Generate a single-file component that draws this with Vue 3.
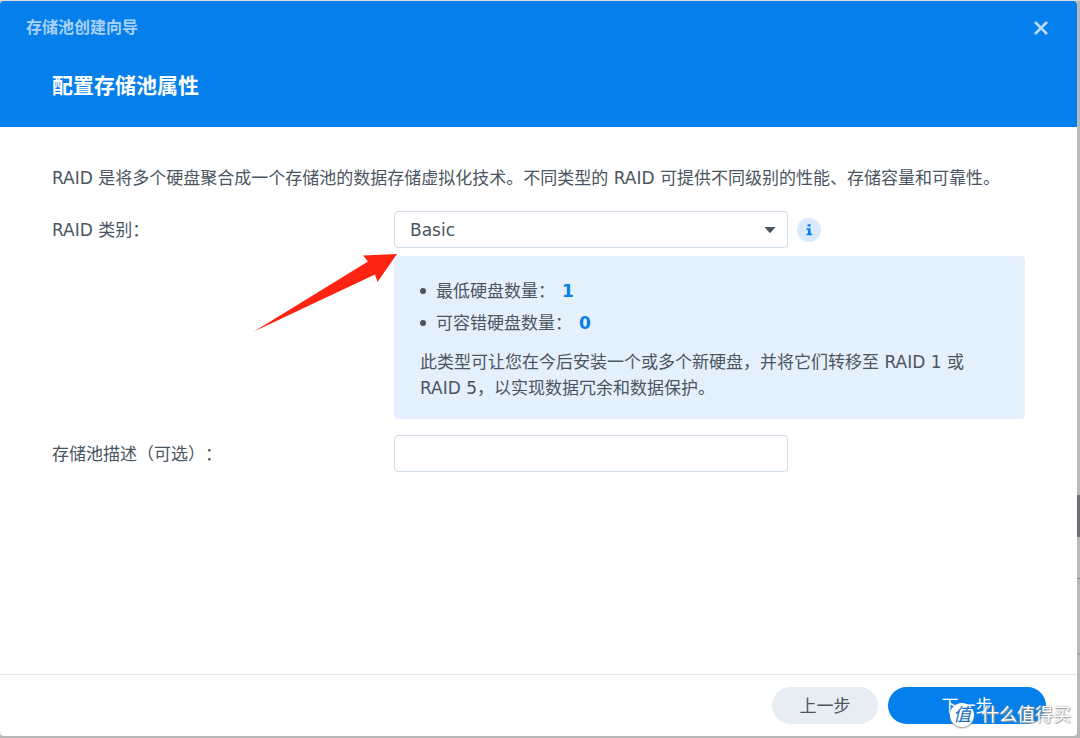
<script setup>
import { ref } from 'vue'

const raidTypes = ['Basic', 'JBOD', 'RAID 0', 'RAID 1', 'RAID 5']
const raidType = ref('Basic')
const description = ref('')
const facts = [
  { label: '最低硬盘数量：', value: 1 },
  { label: '可容错硬盘数量：', value: 0 },
]
</script>

<template>
  <div class="desktop">
    <main class="wizard">
      <header class="head">
        <div class="titlebar">
          <span class="title">存储池创建向导</span>
          <button class="close" type="button" aria-label="关闭">
            <svg viewBox="0 0 14 14" width="14" height="14">
              <path d="M1 1 L13 13 M13 1 L1 13" />
            </svg>
          </button>
        </div>
        <h1>配置存储池属性</h1>
      </header>

      <section class="body">
        <p class="intro">RAID 是将多个硬盘聚合成一个存储池的数据存储虚拟化技术。不同类型的 RAID 可提供不同级别的性能、存储容量和可靠性。</p>
        <div class="row">
          <label for="raid">RAID 类别：</label>
          <div class="control">
            <div class="select">
              <select id="raid" v-model="raidType">
                <option v-for="t in raidTypes" :key="t">{{ t }}</option>
              </select>
              <svg class="caret" viewBox="0 0 12 6" width="12" height="6"><path d="M0.5 0 H11.500 L7 5.2 Q6 6.2 5 5.2 Z" /></svg>
            </div>
            <button class="info" type="button" aria-label="说明">
              <svg viewBox="0 0 24 24" width="24" height="24">
                <path d="M10.6 6.2 H13.6 V8.6 H10.6 Z M9.6 10.2 H13.6 V15.4 H15 V17.2 H9.6 V15.4 H11 V12 H9.6 Z" />
              </svg>
            </button>
          </div>
        </div>
        <div class="detail">
          <svg class="arrow" viewBox="0 0 144 80" width="144" height="80">
            <path d="M0 79 L115 8.5 L110 2.5 L144 1 L124.500 29 L122 21.500 Z" />
          </svg>
          <ul>
            <li v-for="f in facts" :key="f.label">{{ f.label }}<b>{{ f.value }}</b></li>
          </ul>
          <p>此类型可让您在今后安装一个或多个新硬盘，并将它们转移至 RAID 1 或 RAID 5，以实现数据冗余和数据保护。</p>
        </div>
        <div class="row">
          <label for="desc">存储池描述（可选）：</label>
          <div class="control">
            <input id="desc" v-model="description" type="text" />
          </div>
        </div>
      </section>

      <footer class="foot">
        <button class="btn" type="button">上一步</button>
        <button class="btn primary" type="button">下一步</button>
      </footer>
    </main>
    <div class="watermark">
      <span class="badge">值</span>
      <span>什么值得买</span>
    </div>
  </div>
</template>

<style>
html,
body {
  margin: 0;
  background: #bdbdbd;
}
</style>

<style scoped>
* {
  box-sizing: border-box;
}
.desktop {
  position: relative;
  display: flex;
  min-height: 100vh;
  padding: 1px 3px 2px 0;
  font: 17px/26px "DejaVu Sans", "Noto Sans CJK SC", sans-serif;
  text-spacing-trim: space-all;
  color: #4b5561;
  background:
    linear-gradient(#6c7174, #6c7174) right 495px / 3px 42px no-repeat,
    linear-gradient(#85888a, #85888a) right 578px / 3px 1px no-repeat,
    linear-gradient(#a3a3a3, #a3a3a3) right 653px / 3px 2px no-repeat,
    linear-gradient(#dcdcdc, #dcdcdc) 0 0 / 100% 1px no-repeat,
    #b9b9b9;
}
.wizard {
  flex: 1;
  display: flex;
  flex-direction: column;
  min-width: 0;
  overflow: hidden;
  border-radius: 4px;
  background: #fff;
}
.head {
  height: 126px;
  background: #057feb;
  color: #fff;
}
.titlebar {
  display: flex;
  align-items: center;
  justify-content: space-between;
  height: 54px;
  padding: 0 27px 0 26px;
}
.title {
  font-size: 16px;
  font-weight: 700;
  color: #a9d1f8;
}
.close {
  display: grid;
  place-items: center;
  width: 18px;
  height: 18px;
  padding: 0;
  border: 0;
  background: none;
}
.close path {
  fill: none;
  stroke: #b9dafa;
  stroke-width: 2.600;
}
h1 {
  margin: 15px 0 0 52px;
  font-size: 21px;
  line-height: 32px;
  font-weight: 700;
}
.body {
  flex: 1;
  padding: 38px 52px 24px;
}
.intro {
  margin: 0 0 20px;
}
.row {
  display: grid;
  grid-template-columns: 342px 1fr;
  align-items: center;
}
.control {
  display: flex;
  align-items: center;
  gap: 9px;
}
.select {
  position: relative;
  width: 394px;
}
select,
input {
  display: block;
  width: 394px;
  height: 37px;
  padding: 0 15px;
  border: 1px solid #d0dde8;
  border-radius: 4px;
  background: #fff;
  color: inherit;
  font: inherit;
  appearance: none;
}
.caret {
  position: absolute;
  right: 12px;
  top: 16px;
  fill: #4b5561;
  pointer-events: none;
}
.info {
  width: 24px;
  height: 24px;
  padding: 0;
  border: 0;
  border-radius: 50%;
  background: #d9eafc;
}
.info svg {
  display: block;
  fill: #057feb;
}
.detail {
  position: relative;
  margin: 8px 0 16px 342px;
  padding: 19px 26px 18px;
  border-radius: 4px;
  background: #e4f0fc;
}
.arrow {
  position: absolute;
  right: 100%;
  top: -3px;
  margin-right: -3px;
  fill: #ff2412;
}
ul {
  margin: 0 0 10px;
  padding: 0;
  list-style: none;
}
li {
  display: flex;
  align-items: center;
  height: 32px;
}
li::before {
  content: "";
  width: 6px;
  height: 6px;
  margin-right: 10px;
  border-radius: 50%;
  background: #4b5561;
}
b {
  margin-left: 7px;
  color: #057feb;
}
.detail p {
  margin: 0;
}
.foot {
  display: flex;
  justify-content: flex-end;
  gap: 10px;
  padding: 12px 31px;
  border-top: 1px solid #e1e8ef;
}
.btn {
  width: 106px;
  height: 37px;
  padding: 0;
  border: 0;
  border-radius: 19px;
  background: #e8edf4;
  color: inherit;
  font: inherit;
}
.primary {
  width: 158px;
  background: #057feb;
  color: #fff;
}
.watermark {
  position: absolute;
  right: 9px;
  bottom: 10px;
  display: flex;
  align-items: center;
  gap: 7px;
  color: #fff;
  font-size: 18px;
  text-shadow: 0 0 2px #888, 1px 1px 1px #aaa;
  pointer-events: none;
}
.badge {
  width: 24px;
  height: 24px;
  border-radius: 50%;
  background: #fff;
  box-shadow: 0 1px 2px #888;
  color: #1c6fb8;
  font-style: italic;
  line-height: 24px;
  text-align: center;
  text-shadow: none;
}
</style>
